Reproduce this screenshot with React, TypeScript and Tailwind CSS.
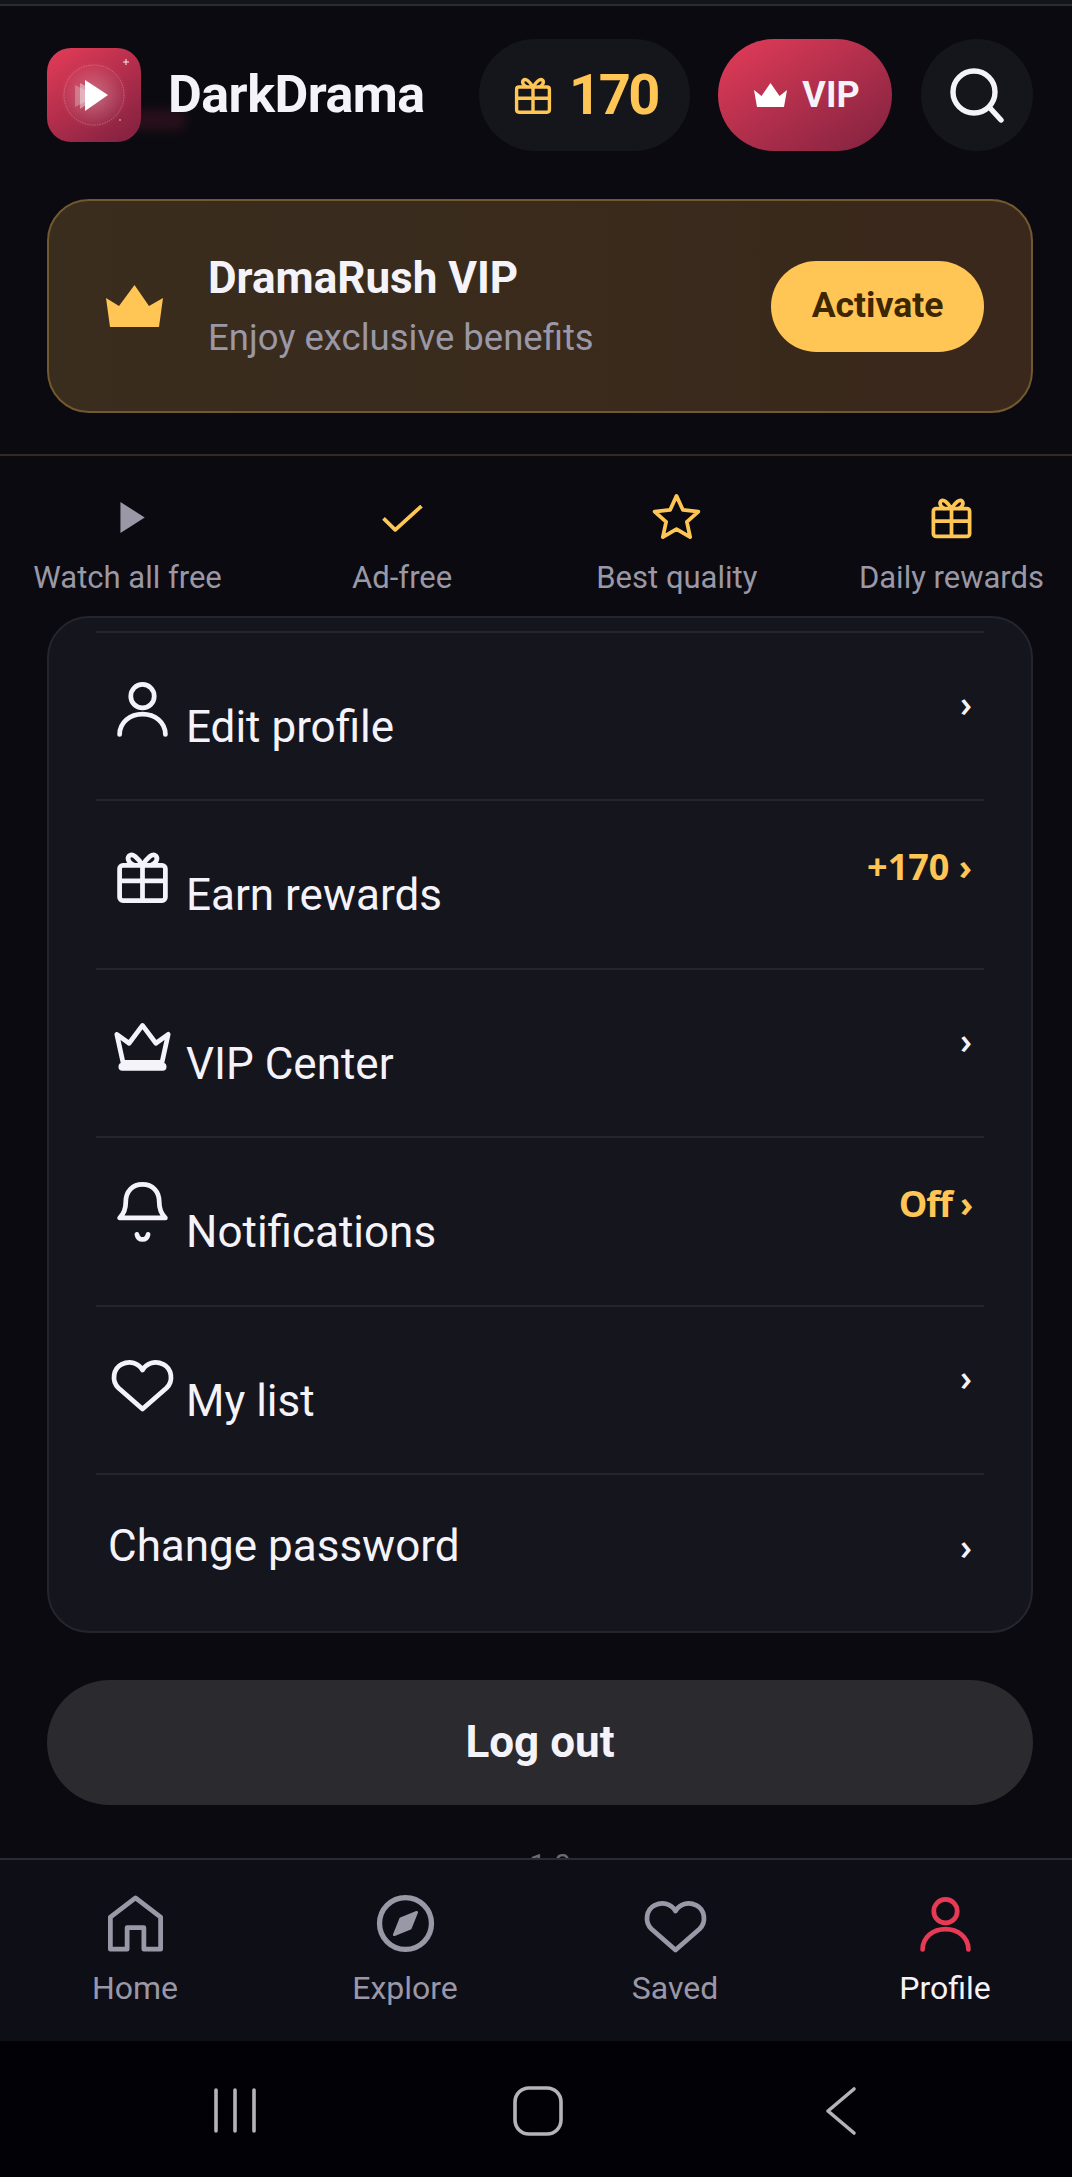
import React from "react";

const GIFT = (
  <>
    <rect x="3.8" y="8" width="16.4" height="12.6" rx="1.2" />
    <path d="M12 8v12.6M3.8 13.6h16.4" />
    <path d="M12 8C10.4 5.4 8.4 3.4 7.2 4.6 6.2 5.8 7.4 7.4 9 8M12 8c1.6-2.6 3.6-4.6 4.8-3.4 1 1.2-.2 2.8-1.8 3.4" />
  </>
);
const PERSON = (
  <>
    <circle cx="12" cy="7.6" r="4.2" />
    <path d="M3.8 21.3C3.8 17 7.5 14 12 14s8.2 3 8.2 7.3" strokeLinecap="round" />
  </>
);
const HEART = <path d="M12 21.5 3.4 14C.8 11.5 1.5 7 4.5 5.5 7.5 4 10.5 5 12 7.5 13.5 5 16.5 4 19.5 5.5c3 1.5 3.7 6 1.1 8.5Z" />;
const CROWN = (
  <>
    <path d="M2.8 8l4.4 3.2L12 4.800l4.800 6.400L21.200 8 19 18H5Z" />
    <path d="M4.800 19.600h14.400" strokeWidth="2.800" strokeLinecap="round" />
  </>
);
const BELL = (
  <>
    <path d="M3.8 13.6h16.4C18.5 12 18 10.5 18 8c0-4-2.5-6.4-6-6.4S6 4 6 8c0 2.5-.5 4-2.2 5.6Z" />
    <path d="M10 19.5c.5 2.4 3.5 2.4 4 0" strokeLinecap="round" />
  </>
);

const Icon = ({ children, className }: { children: React.ReactNode; className: string }) => (
  <svg viewBox="0 0 24 24" fill="none" stroke="currentColor" strokeWidth="1.7" strokeLinejoin="round" className={className}>
    {children}
  </svg>
);

const Logo = () => (
  <div className="relative w-[94px] h-[94px] shrink-0">
    <div className="absolute left-[80px] top-[62px] w-[60px] h-[20px] rounded-full bg-[#5a1a2c] opacity-40 blur-[6px]" />
    <svg viewBox="0 0 94 94" className="relative w-[94px] h-[94px]">
      <defs>
        <linearGradient id="logoBg" x1="0" y1="0" x2="0.7" y2="1">
          <stop offset="0" stopColor="#e53c58" />
          <stop offset="1" stopColor="#8a2342" />
        </linearGradient>
        <radialGradient id="logoGlow" cx="0.5" cy="0.5" r="0.5">
          <stop offset="0" stopColor="#ffffff" stopOpacity="0.28" />
          <stop offset="1" stopColor="#ffffff" stopOpacity="0" />
        </radialGradient>
      </defs>
      <rect width="94" height="94" rx="24" fill="url(#logoBg)" />
      <circle cx="47" cy="47" r="34" fill="url(#logoGlow)" />
      <circle cx="47" cy="47" r="30" fill="none" stroke="#ffffff" strokeOpacity="0.35" strokeWidth="0.7" strokeDasharray="1.5 1" />
      <path d="M28 37 38 42v12l-10 5Z" fill="#fff" opacity="0.25" />
      <path d="M33 35 42 40v15l-9 6Z" fill="#fff" opacity="0.4" />
      <path d="M38 32 61 47 38 63Z" fill="#fff" />
      <path d="M79 11v6M76 14h6" stroke="#fff" strokeOpacity="0.9" strokeWidth="1" />
      <circle cx="73" cy="72" r="1" fill="#fff" fillOpacity="0.5" />
    </svg>
  </div>
);

const perks = [
  { label: "Watch all free", icon: <svg viewBox="0 0 24 24" className="w-[53px] h-[53px] ml-[7px] text-[#9a98a6]"><path d="M7 5l11 7-11 7Z" fill="currentColor" /></svg> },
  { label: "Ad-free", icon: <Icon className="w-[53px] h-[53px] text-[#ffc655]"><path d="M3.4 12.4 8.7 17.6 20.6 6.8" /></Icon> },
  { label: "Best quality", icon: <Icon className="w-[53px] h-[53px] text-[#ffc655]"><path d="M12 2.2l2.9 6.4 7 .7-5.2 4.7 1.5 6.9-6.2-3.6-6.2 3.6 1.5-6.9-5.2-4.7 7-.7Z" /></Icon> },
  { label: "Daily rewards", icon: <Icon className="w-[53px] h-[53px] text-[#ffc655]">{GIFT}</Icon> },
];

const menu = [
  { label: "Edit profile", icon: PERSON },
  { label: "Earn rewards", icon: GIFT, value: "+170 ›" },
  { label: "VIP Center", icon: CROWN },
  { label: "Notifications", icon: BELL, value: "Off ›", tight: true },
  { label: "My list", icon: HEART },
];

const MenuRow = ({ label, icon, value, tight }: { label: string; icon: React.ReactNode; value?: string; tight?: boolean }) => (
  <div className="flex justify-between items-start h-[168.4px] border-t-2 border-[#25252e] pt-[42px] pl-[13px] pr-[12px]">
    <div className="flex items-baseline gap-[10px]">
      <Icon className="w-[67px] h-[67px] shrink-0">{icon}</Icon>
      <span className="text-[44px] leading-[50px]">{label}</span>
    </div>
    {value ? (
      <span className={`mt-[4px] font-['Open_Sans',sans-serif] font-bold text-[36px] leading-[40px] text-[#ffc655] ${tight ? "tracking-[-1.2px]" : ""}`}>{value}</span>
    ) : (
      <span className="mt-[9px] font-['Open_Sans',sans-serif] font-semibold text-[36px] leading-[40px]">›</span>
    )}
  </div>
);

const nav = [
  { label: "Home", icon: <path d="M3 21.2V9.7L12 2.8l9 6.9v11.5h-6v-7.7H9v7.7Z" /> },
  {
    label: "Explore",
    icon: (
      <>
        <circle cx="12" cy="12" r="9.3" strokeWidth="1.9" />
        <path d="M16 8l-2.3 5.7L8 16l2.3-5.7Z" fill="currentColor" strokeWidth="1" />
      </>
    ),
  },
  { label: "Saved", icon: HEART },
  { label: "Profile", icon: PERSON, active: true },
];

export default function App() {
  return (
    <div className="w-[1072px] h-[2177px] flex flex-col overflow-hidden bg-[#0a0a10] text-[#f5f3fa] font-['Roboto',sans-serif]">
      <main className="flex-1 min-h-0 overflow-hidden">
        <div className="h-[6px] bg-[#14141b] border-b-2 border-[#2b2b33]" />

        {/* Header */}
        <header className="flex items-center h-[112px] mt-[33px] pl-[47px] pr-[39px]">
          <Logo />
          <span className="relative ml-[27px] text-[52px] font-bold tracking-[-0.5px]">DarkDrama</span>
          <div className="ml-auto flex items-center justify-center gap-[12px] w-[211px] h-[112px] pr-[2px] rounded-full bg-[#15151c] text-[#ffc655]">
            <Icon className="w-[48px] h-[48px] shrink-0">{GIFT}</Icon>
            <span className="text-[56px] font-bold leading-none tracking-[-2.5px]">170</span>
          </div>
          <div className="ml-[28px] flex items-center justify-center gap-[15px] w-[174px] h-[112px] pl-[4px] rounded-full bg-linear-to-br from-[#e53c58] to-[#80223f]">
            <svg viewBox="0 0 33 24" className="w-[33px] h-[24px]">
              <path d="M0 7l7.5 6L16.5 0l9 13L33 7l-3 17H3Z" fill="#fff" />
            </svg>
            <span className="text-[36px] font-bold leading-none">VIP</span>
          </div>
          <div className="ml-[29px] flex items-center justify-center w-[112px] h-[112px] rounded-full bg-[#15151c]">
            <svg viewBox="0 0 60 60" fill="none" stroke="#f5f3fa" strokeWidth="5.4" strokeLinecap="round" className="w-[60px] h-[60px]">
              <circle cx="27" cy="27" r="21" />
              <path d="M43 43 54 55" />
            </svg>
          </div>
        </header>

        {/* VIP banner */}
        <section className="flex items-center h-[214px] mt-[48px] ml-[47px] mr-[39px] pl-[57px] pr-[47px] rounded-[42px] border-2 border-[#72592f] bg-linear-to-r from-[#392d1e] to-[#39281b]">
          <svg viewBox="0 0 57 42" className="w-[57px] h-[42px] shrink-0">
            <path d="M0 13l13 8L28.5 0 43 21l14-8-4 29H4Z" fill="#ffc655" />
          </svg>
          <div className="ml-[45px] flex flex-col">
            <span className="text-[44px] leading-[50px] font-bold">DramaRush VIP</span>
            <span className="mt-[13px] text-[36.5px] leading-[44px] text-[#9a98a6]">Enjoy exclusive benefits</span>
          </div>
          <button className="ml-auto w-[213px] h-[91px] rounded-full bg-[#ffc655] text-[#3d2600] text-[35.5px] font-bold">Activate</button>
        </section>

        <div className="h-[2px] mt-[41px] bg-[#332b20]" />

        {/* Perks */}
        <div className="grid grid-cols-4 gap-x-[73.6px] h-[160px] pl-[27px] pr-[20px] pt-[35px]">
          {perks.map((p) => (
            <div key={p.label} className="flex flex-col items-center whitespace-nowrap">
              {p.icon}
              <span className="mt-[15px] text-[31px] leading-[38px] text-[#9a98a6]">{p.label}</span>
            </div>
          ))}
        </div>

        {/* Menu */}
        <section className="h-[1017px] ml-[47px] mr-[39px] pt-[13px] px-[47px] rounded-[42px] border-2 border-[#25252e] bg-[#15151e]">
          {menu.map((m) => (
            <MenuRow key={m.label} {...m} />
          ))}
          <div className="flex justify-between items-start border-t-2 border-[#25252e] pt-[46px] pl-[12px] pr-[12px]">
            <span className="text-[44px] leading-[50px]">Change password</span>
            <span className="mt-[6px] font-['Open_Sans',sans-serif] font-semibold text-[36px] leading-[40px]">›</span>
          </div>
        </section>

        <button className="block w-[986px] h-[125px] mt-[47px] mx-[47px] pb-[2px] rounded-full bg-[#2a2a2f] text-[44px] font-bold">Log out</button>

        <p className="mt-[42px] pl-[28px] text-center text-[30px] leading-[36px] text-[#6b6a76]">1.0</p>
      </main>

      {/* Bottom nav */}
      <nav className="shrink-0 grid grid-cols-[repeat(4,270px)] h-[183px] pt-[30px] border-t-2 border-[#2b2b33] bg-[#0e0e16]">
        {nav.map((n) => (
          <div key={n.label} className="flex flex-col items-center">
            <Icon className={`w-[67px] h-[67px] ${n.active ? "text-[#e63a55]" : "text-[#9a98a6]"}`}>{n.icon}</Icon>
            <span className={`mt-[12px] text-[32px] leading-[38px] ${n.active ? "text-[#f5f3fa]" : "text-[#9a98a6]"}`}>{n.label}</span>
          </div>
        ))}
      </nav>

      {/* Android system bar */}
      <div className="shrink-0 flex items-center h-[136px] bg-[#020206]">
        <svg viewBox="0 0 1072 136" className="w-[1072px] h-[136px]" fill="none" stroke="#b4b4b6" strokeWidth="3.6" strokeLinecap="round" strokeLinejoin="round">
          <path d="M216 49v41M235 49v41M254 49v41" />
          <rect x="515" y="47" width="46" height="46" rx="14" />
          <path d="M854 48 828 70l26 22" />
        </svg>
      </div>
    </div>
  );
}
